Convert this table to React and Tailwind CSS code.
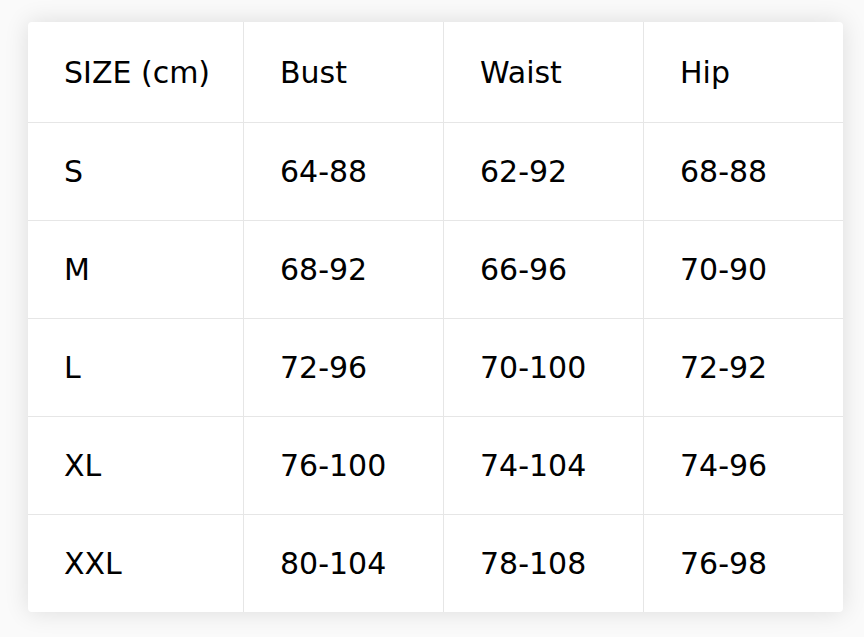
import React from "react";

const rows = [
  ["SIZE (cm)", "Bust", "Waist", "Hip"],
  ["S", "64-88", "62-92", "68-88"],
  ["M", "68-92", "66-96", "70-90"],
  ["L", "72-96", "70-100", "72-92"],
  ["XL", "76-100", "74-104", "74-96"],
  ["XXL", "80-104", "78-108", "76-98"],
];

export default function App() {
  return (
    <div className="min-h-screen w-full bg-[#fafafa] pt-[22px] pl-[28px]" style={{ fontFamily: '"DejaVu Sans", "Noto Sans", sans-serif' }}>
      <div className="w-[815px] overflow-hidden rounded-[4px] bg-white text-[30px] text-black shadow-[0_0_24px_rgba(0,0,0,0.12)]">
        {rows.map((r, i) => (
          <div key={i} className={`grid grid-cols-[215px_200px_200px_200px] ${i > 0 ? "border-t border-[#e6e6e6] h-[98px]" : "h-[100px]"}`}>
            {r.map((c, j) => (
              <div key={j} className={`flex items-center pl-[36px] ${j > 0 ? "border-l border-[#e6e6e6]" : ""}`}>
                {c}
              </div>
            ))}
          </div>
        ))}
      </div>
    </div>
  );
}
